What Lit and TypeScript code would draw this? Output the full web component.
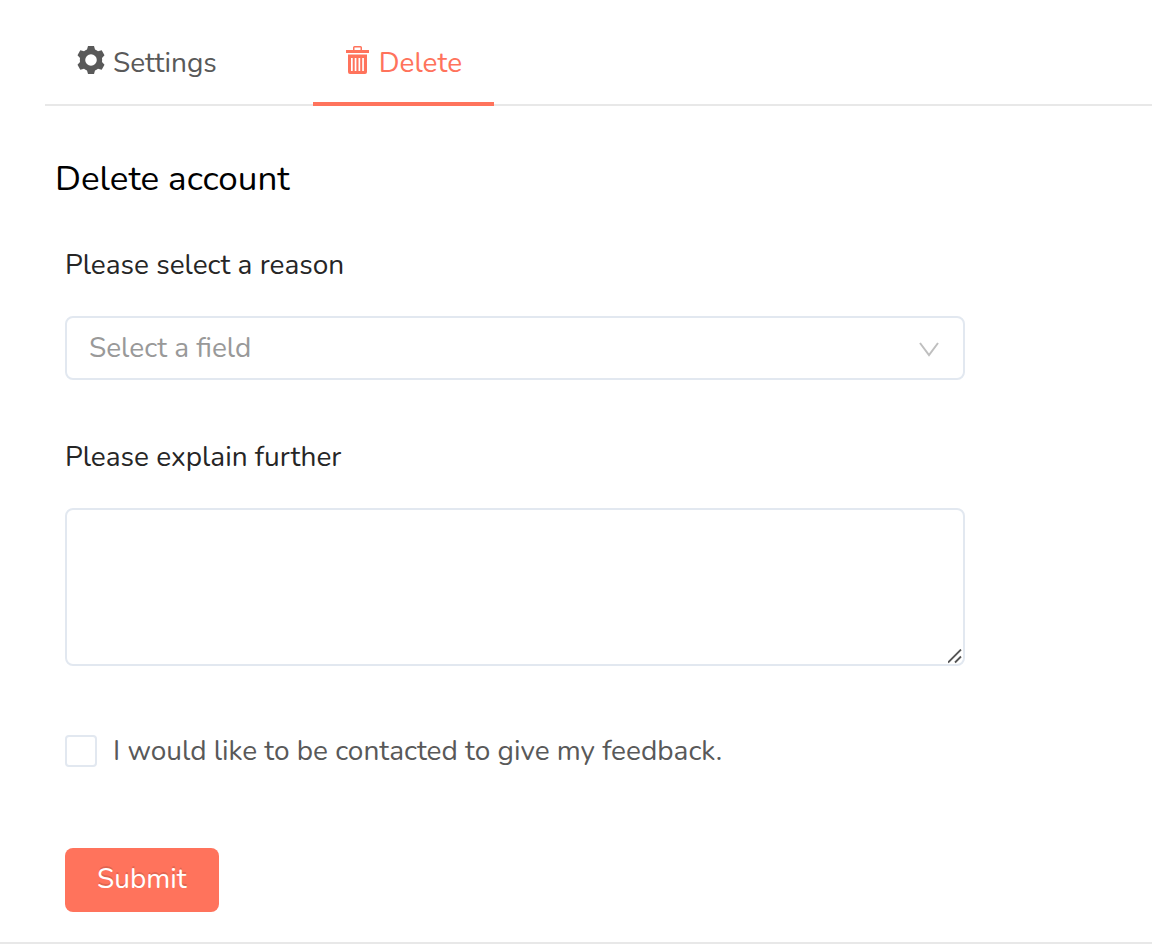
import { LitElement, html, css } from "lit";
import { customElement, state } from "lit/decorators.js";

@customElement("app-root")
export class AppRoot extends LitElement {
  static styles = css`
    :host {
      display: block;
      min-height: 100vh;
      box-sizing: border-box;
      overflow-x: hidden;
      background: #fff;
      color: #595959;
      font-family: Nunito, Lato, "Open Sans", sans-serif;
      font-size: 28px;
      line-height: 40px;
    }
    * {
      box-sizing: border-box;
    }
    .page {
      padding-bottom: 30px;
      border-bottom: 2px solid #e8e8e8;
    }
    .tabs {
      display: flex;
      gap: 64px;
      margin-left: 45px;
      height: 106px;
      box-shadow: inset 0 -2px #e8e8e8;
    }
    .tab {
      display: flex;
      align-items: center;
      gap: 8px;
      padding: 24px 32px 0;
      border: 0;
      border-bottom: 4px solid transparent;
      background: none;
      color: inherit;
      font: inherit;
      cursor: pointer;
    }
    .tab.active {
      color: #ff735c;
      border-bottom-color: #ff735c;
    }
    .icon {
      width: 28px;
      height: 28px;
      margin-bottom: 6px;
      fill: currentColor;
    }
    .icon.trash {
      width: 26px;
    }
    .title {
      margin: 51px 0 0 55px;
      color: #000;
      font-size: 35px;
      font-weight: 400;
      line-height: 44px;
    }
    .form {
      display: flex;
      flex-direction: column;
      align-items: flex-start;
      max-width: 965px;
      padding: 44px 0 0 65px;
    }
    .label {
      color: #262626;
    }
    .picker {
      position: relative;
      width: 100%;
      margin: 31px 0 57px;
    }
    .select {
      display: block;
      width: 100%;
      height: 64px;
      padding: 0 60px 0 22px;
      border: 2px solid #e2e8f0;
      border-radius: 8px;
      appearance: none;
      background: #fff;
      color: #999;
      font: inherit;
    }
    .chevron {
      position: absolute;
      right: 24px;
      top: 24px;
      width: 24px;
      height: 20px;
      fill: none;
      stroke: #bfbfbf;
      stroke-width: 2;
      pointer-events: none;
    }
    .textarea {
      display: block;
      width: 100%;
      height: 158px;
      margin: 31px 0 65px;
      padding: 8px 22px;
      border: 2px solid #e2e8f0;
      border-radius: 8px;
      background: #fff;
      color: #262626;
      font: inherit;
      resize: vertical;
    }
    .textarea::-webkit-resizer {
      background: url("data:image/svg+xml,%3Csvg xmlns='http://www.w3.org/2000/svg' width='15' height='15' viewBox='0 0 15 15'%3E%3Cpath d='M0 13.500L13 .5M7 13.500l6-6' stroke='%23555' stroke-width='1.8'/%3E%3C/svg%3E") no-repeat;
    }
    .check {
      display: flex;
      align-items: center;
      gap: 16px;
    }
    .box {
      width: 32px;
      height: 32px;
      margin: 0;
      border: 2px solid #e2e8f0;
      border-radius: 4px;
      appearance: none;
      background: #fff;
    }
    .box:checked {
      border-color: #ff735c;
      background: #ff735c;
    }
    .submit {
      height: 64px;
      margin-top: 77px;
      padding: 0 32px 2px;
      border: 0;
      border-radius: 8px;
      background: #ff735c;
      color: #fff;
      font: inherit;
      text-shadow: 0 -2px rgba(0, 0, 0, 0.12);
      cursor: pointer;
    }
  `;

  @state() private active = "delete";

  render() {
    return html`
      <main class="page">
        <nav class="tabs" role="tablist">
          <button
            class="tab ${this.active === "settings" ? "active" : ""}"
            role="tab"
            aria-selected=${this.active === "settings"}
            @click=${() => (this.active = "settings")}
          >
            <svg class="icon" viewBox="0 0 28 28" aria-hidden="true">
              <path
                fill-rule="evenodd"
                d="M11 0h6l1 3.500Q19.500 4 21 5.200l3.700-1L27.500 9.300 25 12q.3 2 0 4l2.500 2.700-2.800 5.100-3.700-1Q19.500 24 18 24.500L17 28h-6l-1-3.500Q8.500 24 7 22.800l-3.700 1L.5 18.700 3 16q-.3-2 0-4L.5 9.300 3.300 4.200l3.700 1Q8.500 4 10 3.500zM14 8.200a5.800 5.800 0 1 0 0 11.600a5.800 5.800 0 1 0 0-11.600z"
              />
            </svg>
            Settings
          </button>
          <button
            class="tab ${this.active === "delete" ? "active" : ""}"
            role="tab"
            aria-selected=${this.active === "delete"}
            @click=${() => (this.active = "delete")}
          >
            <svg class="icon trash" viewBox="0 0 26 28" aria-hidden="true">
              <path
                fill-rule="evenodd"
                d="M1 4h7V1.500Q8 0 9.500 0h6Q17 0 17 1.500V4h7v3H1zM9.500 1.500V4h6V1.500zM3 8.500h19V26q0 2-2 2H5q-2 0-2-2zM6 12v13h1.700V12zM9.700 12v13h1.700V12zM13.500 12v13h1.700V12zM17.200 12v13h1.700V12z"
              />
            </svg>
            Delete
          </button>
        </nav>
        <h1 class="title">Delete account</h1>
        <form class="form" @submit=${(e: Event) => e.preventDefault()}>
          <label class="label" for="reason">Please select a reason</label>
          <div class="picker">
            <select class="select" id="reason">
              <option>Select a field</option>
            </select>
            <svg class="chevron" viewBox="0 0 24 20" aria-hidden="true">
              <path d="M3 3l9 12 9-12" />
            </svg>
          </div>
          <label class="label" for="details">Please explain further</label>
          <textarea class="textarea" id="details"></textarea>
          <label class="check" for="contact">
            <input class="box" id="contact" type="checkbox" />
            I would like to be contacted to give my feedback.
          </label>
          <button class="submit" type="submit">Submit</button>
        </form>
      </main>
    `;
  }
}
